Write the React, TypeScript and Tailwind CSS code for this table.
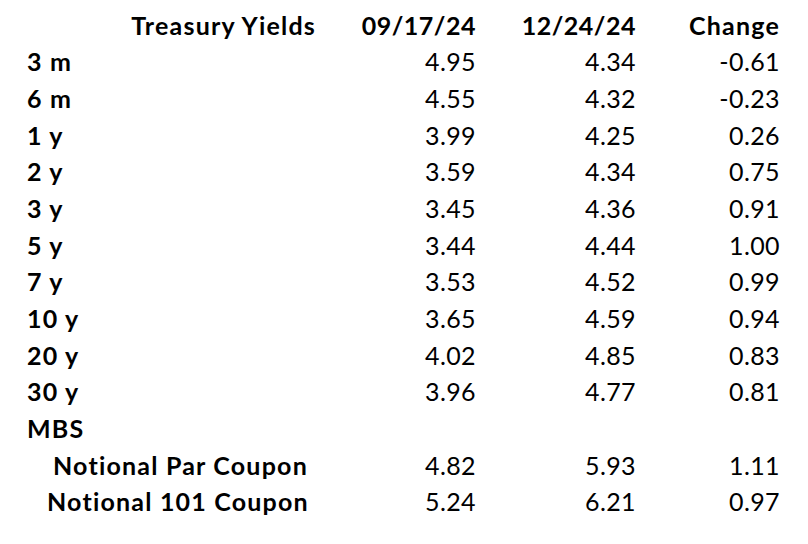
const rows = [
  { label: '3 m', a: '4.95', b: '4.34', c: '-0.61' },
  { label: '6 m', a: '4.55', b: '4.32', c: '-0.23' },
  { label: '1 y', a: '3.99', b: '4.25', c: '0.26' },
  { label: '2 y', a: '3.59', b: '4.34', c: '0.75' },
  { label: '3 y', a: '3.45', b: '4.36', c: '0.91' },
  { label: '5 y', a: '3.44', b: '4.44', c: '1.00' },
  { label: '7 y', a: '3.53', b: '4.52', c: '0.99' },
  { label: '10 y', a: '3.65', b: '4.59', c: '0.94' },
  { label: '20 y', a: '4.02', b: '4.85', c: '0.83' },
  { label: '30 y', a: '3.96', b: '4.77', c: '0.81' },
];

const Num = ({ v }: { v: string }) => (
  <div className="flex items-center justify-end tracking-[0.4px]">{v}</div>
);

export default function App() {
  return (
    <div
      className="w-[808px] h-[544px] bg-white text-black text-[25px] leading-none pt-[7px]"
      style={{ fontFamily: 'Lato, "Open Sans", sans-serif' }}
    >
      <div className="grid grid-cols-[316px_160px_160px_144px] auto-rows-[36.67px]">
        {/* header */}
        <div className="flex items-center justify-end font-bold tracking-[1.2px]">Treasury Yields</div>
        <div className="flex items-center justify-end font-bold tracking-[0.5px]">09/17/24</div>
        <div className="flex items-center justify-end font-bold tracking-[0.5px]">12/24/24</div>
        <div className="flex items-center justify-end font-bold tracking-[1.2px]">Change</div>

        {rows.map((r) => (
          <div key={r.label} className="contents">
            <div className="flex items-center pl-[27px] font-bold tracking-[1.2px]">{r.label}</div>
            <Num v={r.a} />
            <Num v={r.b} />
            <Num v={r.c} />
          </div>
        ))}

        <div className="flex items-center pl-[27px] font-bold tracking-[1.2px]">MBS</div>
        <div />
        <div />
        <div />

        <div className="flex items-center pl-[53px] font-bold tracking-[1.2px]">Notional Par Coupon</div>
        <Num v="4.82" />
        <Num v="5.93" />
        <Num v="1.11" />

        <div className="flex items-center pl-[47px] font-bold tracking-[1.2px]">Notional 101 Coupon</div>
        <Num v="5.24" />
        <Num v="6.21" />
        <Num v="0.97" />
      </div>
    </div>
  );
}
